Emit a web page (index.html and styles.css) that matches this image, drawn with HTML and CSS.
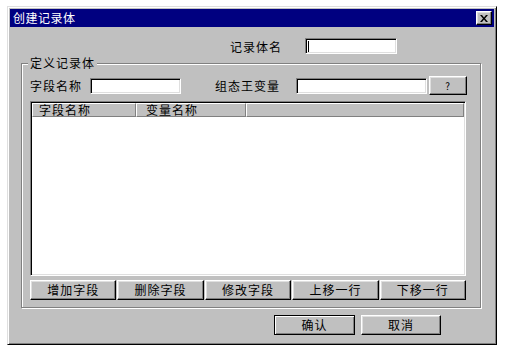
FILE: index.html
```html
<!DOCTYPE html>
<html lang="zh-CN">
<head>
    <meta charset="UTF-8">
    <title>创建记录体</title>
    <link rel="stylesheet" href="styles.css">
</head>
<body>
    <div class="window">
        <div class="titlebar">
            <span class="title">创建记录体</span>
            <span class="close-btn">
                <svg width="8" height="7" viewBox="0 0 8 7"><path d="M0 0h2l2 2.5L6 0h2L5 3.5 8 7H6L4 4.5 2 7H0l3-3.5z" fill="#000"/></svg>
            </span>
        </div>

        <div class="name-row">
            <span class="label name-label">记录体名</span>
            <div class="field name-field"><span class="caret"></span></div>
        </div>

        <div class="group">
            <span class="legend">定义记录体</span>
            <div class="field-row">
                <span class="label field-label">字段名称</span>
                <div class="field field-name"></div>
                <span class="label var-label">组态王变量</span>
                <div class="field var-name"></div>
                <button class="btn btn-browse">?</button>
            </div>

            <div class="listview">
                <div class="list-head">
                    <span class="col col-field">字段名称</span>
                    <span class="col col-var">变量名称</span>
                    <span class="col col-rest"></span>
                </div>
                <div class="list-body"></div>
            </div>

            <div class="action-row">
                <button class="btn">增加字段</button>
                <button class="btn">删除字段</button>
                <button class="btn">修改字段</button>
                <button class="btn">上移一行</button>
                <button class="btn">下移一行</button>
            </div>
        </div>

        <div class="dialog-buttons">
            <button class="btn btn-dialog btn-default">确认</button>
            <button class="btn btn-dialog">取消</button>
        </div>
    </div>
</body>
</html>
```

FILE: styles.css
```css
body {
    margin: 0;
    padding: 0;
    background: #fff;
    font-family: "Noto Sans CJK SC", "DejaVu Sans", sans-serif;
    font-size: 12px;
    color: #000;
}
.window {
    margin: 6px 0 0 7px;
    width: 490px;
    height: 339px;
    box-sizing: border-box;
    padding: 1px;
    background: #c0c0c0;
    border: 1px solid;
    border-color: #dfdfdf #000 #000 #dfdfdf;
    box-shadow: inset 1px 1px 0 #fff, inset -1px -1px 0 #808080;
}
.titlebar {
    height: 18px;
    margin: 1px 1px 0 1px;
    background: #000080;
    display: flex;
    align-items: center;
    justify-content: space-between;
    padding: 0 2px 0 3px;
}
.title {
    color: #fff;
    line-height: 18px;
    letter-spacing: 0.5px;
}
.close-btn {
    width: 16px;
    height: 14px;
    box-sizing: border-box;
    background: #c0c0c0;
    border: 1px solid;
    border-color: #fff #000 #000 #fff;
    box-shadow: inset -1px -1px 0 #808080, inset 1px 1px 0 #dfdfdf;
    display: flex;
    align-items: center;
    justify-content: center;
}
.label {
    line-height: 15px;
    letter-spacing: 1px;
    white-space: nowrap;
}
.field {
    height: 16px;
    box-sizing: border-box;
    background: #fff;
    border: 1px solid;
    border-color: #808080 #fff #fff #808080;
    box-shadow: inset 1px 1px 0 #000, inset -1px -1px 0 #dfdfdf;
    display: flex;
    align-items: center;
    padding-left: 2px;
}
.caret {
    display: inline-block;
    width: 1px;
    height: 11px;
    background: #000;
}
.name-row {
    display: flex;
    align-items: center;
    margin-top: 11px;
    padding-left: 221px;
}
.name-label {
    width: 75px;
}
.name-field {
    width: 92px;
}
.group {
    position: relative;
    margin: 9px 0 0 12px;
    width: 460px;
    height: 245px;
    box-sizing: border-box;
    border: 1px solid #808080;
    box-shadow: inset 1px 1px 0 #fff, 1px 1px 0 #fff;
}
.legend {
    position: absolute;
    left: 6px;
    top: -9px;
    padding: 0 2px 0 2px;
    background: #c0c0c0;
    line-height: 16px;
    letter-spacing: 1px;
}
.field-row {
    display: flex;
    align-items: center;
    margin-top: 12px;
    padding-left: 8px;
}
.field-label {
    width: 60px;
}
.field-name {
    width: 91px;
}
.var-label {
    margin-left: 34px;
    width: 81px;
}
.var-name {
    width: 131px;
}
.btn {
    font-family: "Noto Sans CJK SC", "DejaVu Sans", sans-serif;
    font-size: 12px;
    color: #000;
    background: #c0c0c0;
    border: 1px solid;
    border-color: #fff #000 #000 #fff;
    box-shadow: inset -1px -1px 0 #808080, inset 1px 1px 0 #dfdfdf;
    padding: 0;
    letter-spacing: 1px;
    line-height: 16px;
}
.btn-browse {
    margin-left: 2px;
    width: 38px;
    height: 19px;
    font-size: 10px;
}
.listview {
    margin: 6px 0 0 8px;
    width: 436px;
    height: 175px;
    box-sizing: border-box;
    background: #fff;
    border: 1px solid;
    border-color: #808080 #fff #fff #808080;
    box-shadow: inset 1px 1px 0 #000, inset -1px -1px 0 #dfdfdf;
    padding: 1px 1px 1px 1px;
    display: flex;
    flex-direction: column;
}
.list-head {
    display: flex;
    height: 14px;
}
.col {
    box-sizing: border-box;
    background: #c0c0c0;
    border: 1px solid;
    border-color: #fff #808080 #808080 #fff;
    line-height: 12px;
    padding-left: 6px;
    letter-spacing: 1px;
    white-space: nowrap;
}
.col-field {
    width: 104px;
}
.col-var {
    width: 110px;
    padding-left: 9px;
}
.col-rest {
    flex: 1;
}
.list-body {
    flex: 1;
    background: #fff;
}
.action-row {
    display: flex;
    gap: 1px;
    margin: 4px 0 0 8px;
    width: 436px;
}
.action-row .btn {
    flex: 1;
    height: 20px;
}
.dialog-buttons {
    display: flex;
    gap: 6px;
    margin-top: 7px;
    padding-left: 265px;
}
.btn-dialog {
    width: 80px;
    height: 20px;
}
.btn-default {
    width: 81px;
    border-color: #000;
    box-shadow: inset 1px 1px 0 #fff, inset -1px -1px 0 #808080;
}
```
